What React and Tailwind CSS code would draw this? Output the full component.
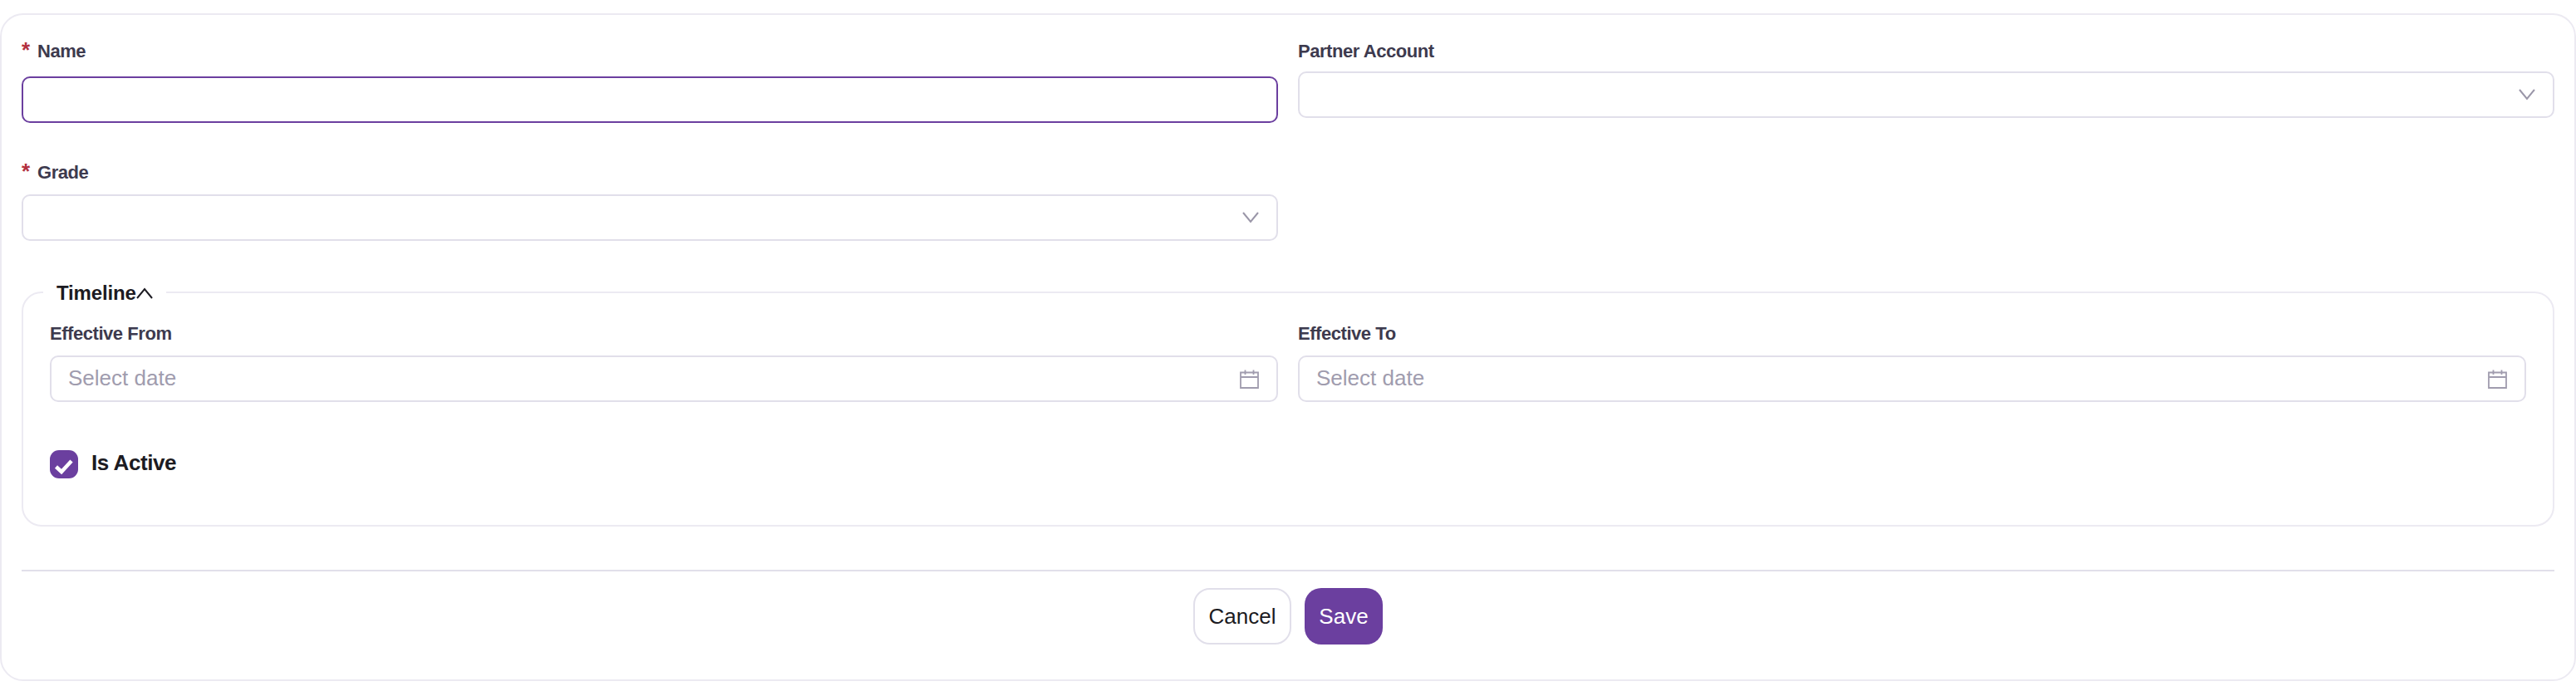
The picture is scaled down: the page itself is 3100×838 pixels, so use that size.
import React from 'react';

function Label({ children, required }) {
  return (
    <label className="flex items-start h-[28px] text-[22px] leading-[28px] font-bold tracking-[-0.45px] text-[#3d3a4e]">
      {required && <span className="w-[19px] text-[26px] text-[#b3303f] leading-[24px] shrink-0">*</span>}
      {children}
    </label>
  );
}

function Chevron({ up, className }) {
  return (
    <svg viewBox="0 0 20 14" fill="none" stroke="currentColor" strokeWidth="2" className={`w-[20px] h-[14px] ${className}`}>
      <path d={up ? 'M1 13 L10 2 L19 13' : 'M1 1 L10 12 L19 1'} />
    </svg>
  );
}

function CalendarIcon() {
  return (
    <svg viewBox="0 0 23 23" fill="none" stroke="currentColor" strokeWidth="1.8" className="w-[23px] h-[23px] text-[#a09cae]">
      <path d="M1 3.5 H22 V22 H1 Z M1 9 H22 M6.5 0.5 V6 M16.5 0.5 V6" />
    </svg>
  );
}

function Select() {
  return (
    <div className="h-[56px] flex items-center justify-end pr-[21px] rounded-[10px] border-2 border-[#e1dfea] bg-white">
      <Chevron className="text-[#9a96a8]" />
    </div>
  );
}

function DateInput() {
  return (
    <div className="h-[56px] flex items-center justify-between pl-[20px] pr-[21px] rounded-[10px] border-2 border-[#e1dfea] bg-white">
      <span className="text-[26px] leading-[26px] -mt-[2px] text-[#a09cae]">Select date</span>
      <CalendarIcon />
    </div>
  );
}

export default function App() {
  return (
    <div className="bg-white h-[838px] pt-[16px] font-['Liberation_Sans',Arial,sans-serif]">
      <div className="h-[804px] w-[3100px] rounded-[28px] border-2 border-[#eceaf2] px-[24px] pt-[30px]">
        <div className="grid grid-cols-2 gap-x-[24px]">
          <div className="h-[146px]">
            <Label required>Name</Label>
            <div className="mt-[16px] h-[56px] rounded-[10px] border-2 border-[#6b3f9f] bg-white" />
          </div>
          <div>
            <Label>Partner Account</Label>
            <div className="mt-[10px]"><Select /></div>
          </div>
          <div>
            <Label required>Grade</Label>
            <div className="mt-[12px]"><Select /></div>
          </div>
        </div>

        <fieldset className="mt-[48px] h-[296px] rounded-[24px] border-2 border-[#eceaf2] px-[32px]">
          <legend className="-ml-[8px] px-[16px] h-[28px] flex items-center gap-0 text-[24px] leading-[28px] font-bold tracking-[-0.15px] text-[#1c1b22]">
            <span className="mt-[2px]">Timeline</span>
            <Chevron up className="text-[#1c1b22] mt-[2px]" />
          </legend>
          <div className="grid grid-cols-2 gap-x-[24px] mt-[22px]">
            <div>
              <Label>Effective From</Label>
              <div className="mt-[12px]"><DateInput /></div>
            </div>
            <div>
              <Label>Effective To</Label>
              <div className="mt-[12px]"><DateInput /></div>
            </div>
          </div>
          <div className="mt-[58px] flex items-center gap-[16px]">
            <span className="w-[34px] h-[34px] rounded-[11px] bg-[#6b3f9f] flex items-center justify-center">
              <svg viewBox="0 0 34 34" fill="none" stroke="white" strokeWidth="4.5" className="w-[34px] h-[34px]">
                <path d="M7.5 20 L14 26 L26 13" />
              </svg>
            </span>
            <span className="text-[26px] leading-[34px] -mt-[4px] font-bold tracking-[-0.45px] text-[#1c1b22]">Is Active</span>
          </div>
        </fieldset>

        <div className="mt-[52px] border-t-2 border-[#e1dfea] pt-[20px] flex justify-center gap-[16px]">
          <button className="w-[118px] h-[68px] rounded-[20px] border-2 border-[#e1dfea] bg-white text-[26px] text-[#1c1b22]">Cancel</button>
          <button className="w-[94px] h-[68px] rounded-[20px] bg-[#6b3f9f] text-[26px] text-white">Save</button>
        </div>
      </div>
    </div>
  );
}
